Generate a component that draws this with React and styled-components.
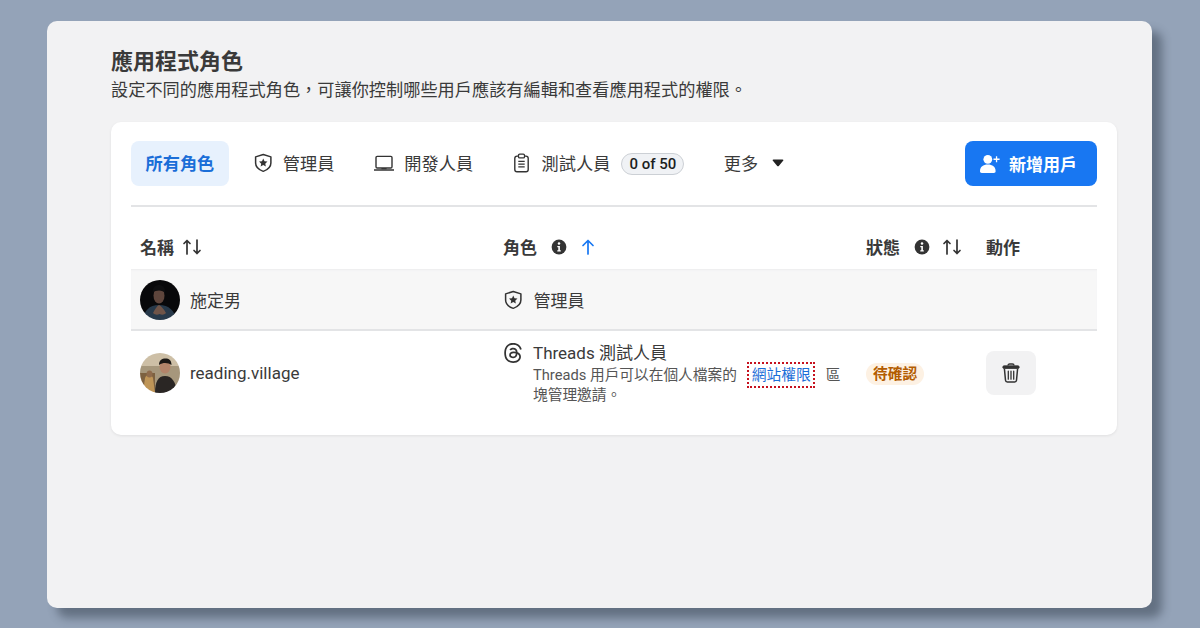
import React from 'react';
import styled, { createGlobalStyle } from 'styled-components';
import { SiThreads } from 'react-icons/si';

const GlobalStyle = createGlobalStyle`
  html, body {
    margin: 0;
    padding: 0;
  }
  body {
    font-family: Roboto, "Noto Sans CJK TC", sans-serif;
    color: #3a3a3a;
  }
  * {
    box-sizing: border-box;
  }
`;

const ShieldIcon = () => (
  <svg width="18.5" height="20" viewBox="0.8 0.6 18.4 19" fill="none">
    <path d="M10 1.6 17.6 4v6.200c0 4-3.400 6.800-7.600 8.200-4.200-1.400-7.600-4.200-7.600-8.200V4L10 1.600Z" stroke="#333" strokeWidth="1.500" strokeLinejoin="round" />
    <path d="m10 5.700 1.250 2.700 2.950.33-2.200 2 .6 2.900-2.600-1.470-2.600 1.470.6-2.900-2.200-2 2.950-.33L10 5.700Z" fill="#333" />
  </svg>
);

const LaptopIcon = () => (
  <svg width="20" height="20" viewBox="0 0 20 20" fill="none">
    <rect x="2" y="3.400" width="16" height="11.600" rx="1.200" stroke="#333" strokeWidth="1.400" />
    <path d="M.5 17h19" stroke="#333" strokeWidth="1.600" strokeLinecap="round" />
    <path d="M7.400 15.700h5.200" stroke="#333" strokeWidth="1.200" />
  </svg>
);

const ClipboardIcon = () => (
  <svg width="15" height="20" viewBox="2.500 0.400 15 19.300" fill="none">
    <rect x="3.300" y="3.200" width="13.400" height="15.600" rx="2.200" stroke="#333" strokeWidth="1.400" />
    <rect x="7" y="1.200" width="6" height="3.700" rx="1.200" fill="#fff" stroke="#333" strokeWidth="1.300" />
    <path d="M6.800 8.400h6.400M6.800 11.200h6.400M6.800 14h6.400" stroke="#333" strokeWidth="1.300" />
  </svg>
);

const CaretIcon = () => (
  <svg width="12" height="8" viewBox="0 0 12 8">
    <path d="M.6 1.100C.6.600 1 .4 1.500.4h9c.5 0 .9.2.9.7 0 .3-.1.5-.3.7L6.800 6.900c-.4.4-1.200.4-1.600 0L.9 1.800C.7 1.600.6 1.400.6 1.100Z" fill="#222" />
  </svg>
);

const InfoIcon = () => (
  <svg width="16" height="16" viewBox="0 0 16 16">
    <circle cx="8" cy="8" r="7.400" fill="#333" />
    <circle cx="8" cy="4.600" r="1.250" fill="#fff" />
    <path d="M6.300 7h2.600v4.200h.9v1.200H6.300v-1.200h1V8.200h-1V7Z" fill="#fff" />
  </svg>
);

const SortIcon = () => (
  <svg width="20" height="16" viewBox="0 0 20 16" fill="none" stroke="#333" strokeWidth="1.700" strokeLinecap="round" strokeLinejoin="round">
    <path d="M5 15V1.500M2 4.500l3-3 3 3" />
    <path d="M15 1v13.500M12 11.500l3 3 3-3" />
  </svg>
);

const SortUpIcon = () => (
  <svg width="14" height="16" viewBox="0 0 14 16" fill="none" stroke="#1877f2" strokeWidth="1.700" strokeLinecap="round" strokeLinejoin="round">
    <path d="M7 15V1.500M2 6.500l5-5 5 5" />
  </svg>
);

const AddUserIcon = () => (
  <svg width="22" height="22" viewBox="0 0 22 22" fill="#fff">
    <circle cx="8.800" cy="6.300" r="4.400" />
    <path d="M1 18.200c0-4.300 3.200-6.600 7.800-6.600s7.800 2.300 7.800 6.600c0 1-.7 1.700-1.700 1.700H2.700c-1 0-1.700-.7-1.700-1.700Z" />
    <path d="M16.900 3.200h1.300v2.400h2.400v1.300h-2.400v2.400h-1.300V6.900h-2.400V5.600h2.400V3.200Z" />
  </svg>
);

const TrashIcon = () => (
  <svg width="18" height="20" viewBox="0 0 18 20" fill="none" stroke="#333">
    <path d="M6 2.600c0-1 .6-1.600 1.600-1.600h2.800c1 0 1.600.6 1.600 1.600" strokeWidth="1.400" />
    <rect x=".8" y="2.800" width="16.400" height="2.700" rx="1.300" fill="#333" strokeWidth=".8" />
    <path d="M2.400 5.600 3.500 17.300c.1 1 .8 1.700 1.800 1.700h7.400c1 0 1.700-.7 1.800-1.700l1.100-11.700" strokeWidth="1.500" />
    <path d="M6.300 8.200v8M9 8.200v8M11.700 8.200v8" strokeWidth="1.300" strokeLinecap="round" />
  </svg>
);

const DarkPortrait = () => (
  <svg viewBox="0 0 40 40" width="40" height="40">
    <rect width="40" height="40" fill="#08080a" />
    <path d="M3 40c1-9 6-15 16-15s16 6 17 15Z" fill="#27394a" />
    <ellipse cx="19" cy="15.500" rx="5.500" ry="8" fill="#5e453c" />
    <path d="M12.500 13c0-6 3-8 6.500-8s6.500 2 6 8c-2-3-9-3.500-12.500 0Z" fill="#0e0e10" />
    <path d="M13 33c2-4 4-7 6-8 2 1 5 4 7 8-2 2-4 2-6.500 1-2 1-4.500 1-6.500-1Z" fill="#6f5448" />
  </svg>
);

const LightPortrait = () => (
  <svg viewBox="0 0 40 40" width="40" height="40">
    <rect width="40" height="40" fill="#a6977c" />
    <rect width="40" height="13" fill="#cdbfa6" />
    <path d="M0 20h15v20H0Z" fill="#7d6140" />
    <path d="M5 25c1-4 7-4 8 0l2 15H3Z" fill="#bf9557" />
    <ellipse cx="9.500" cy="21" rx="3" ry="3.500" fill="#8f6b4c" />
    <path d="M15 40c0-11 3-17 10-17s11 6 12 17Z" fill="#2a2624" />
    <ellipse cx="25" cy="14" rx="5.500" ry="6.500" fill="#b3846a" />
    <path d="M19 12c0-5 3-6.500 6.500-6.500s6 1.500 6 6.500c-3-2-8-3-12.500 0Z" fill="#1c1816" />
  </svg>
);

const Page = styled.div`
  width: 1200px;
  height: 628px;
  overflow: hidden;
  background: #94a3b8;
  padding: 21px 48px 21px 47px;
`;

const Window = styled.main`
  height: 587px;
  padding: 26px 35px 0 64px;
  background: #f2f2f3;
  border-radius: 10px;
  box-shadow: 10px 10px 10px rgba(40, 50, 65, 0.45);
`;

const Heading = styled.h1`
  margin: 0;
  font-size: 22px;
  line-height: 30px;
  font-weight: 700;
  color: #3a3a3a;
`;

const Description = styled.p`
  margin: 0 0 19px;
  font-size: 17.2px;
  line-height: 26px;
  color: #3a3a3a;
`;

const Card = styled.section`
  height: 313px;
  padding: 19px 20px 0;
  background: #fff;
  border-radius: 10px;
  box-shadow: 0 1px 3px rgba(0, 0, 0, 0.08);
`;

const Toolbar = styled.div`
  display: flex;
  align-items: center;
  height: 66px;
  padding-bottom: 19px;
  border-bottom: 2px solid #e3e4e6;
`;

const Tab = styled.div`
  display: flex;
  align-items: center;
  gap: ${({ $gap }) => $gap || 10}px;
  height: 45px;
  margin-right: ${({ $after }) => $after || 0}px;
  padding: ${({ $active }) => ($active ? '0 14.5px 2px' : '0 0 2px')};
  border-radius: 8px;
  font-size: 17.2px;
  font-weight: ${({ $active }) => ($active ? 700 : 400)};
  color: ${({ $active }) => ($active ? '#1a6ed8' : '#3a3a3a')};
  background: ${({ $active }) => ($active ? '#e7f1fd' : 'transparent')};
`;

const Count = styled.span`
  display: flex;
  align-items: center;
  height: 22px;
  margin: 0 0 -2px -2px;
  padding: 0 7px;
  border: 1px solid #ccd0d5;
  border-radius: 11px;
  background: #f0f2f5;
  font-size: 15px;
  font-weight: 500;
  color: #1c1e21;
`;

const AddButton = styled.button`
  display: flex;
  align-items: center;
  gap: 8px;
  height: 45px;
  margin-left: auto;
  padding: 0 20px 0 14px;
  border: 0;
  border-radius: 8px;
  background: #1877f2;
  color: #fff;
  font: 700 17px Roboto, "Noto Sans CJK TC", sans-serif;
`;

const HeaderRow = styled.div`
  display: grid;
  grid-template-columns: 363px 363px 120px 1fr;
  align-items: center;
  height: 62px;
  padding: 18px 0 0 9px;
`;

const HeaderCell = styled.div`
  display: flex;
  align-items: center;
  gap: ${({ $gap }) => $gap || 8}px;
  font-size: 17px;
  font-weight: 700;
  color: #3a3a3a;
`;

const Label = styled.span`
  margin-top: -2px;
`;

const StatusSort = styled.span`
  display: flex;
  margin-left: -2px;
`;

const Row = styled.div`
  display: grid;
  grid-template-columns: 363px 363px 120px 1fr;
  align-items: center;
  height: ${({ $height }) => $height}px;
  padding-left: 9px;
  padding-top: ${({ $muted }) => ($muted ? 2 : 0)}px;
  background: ${({ $muted }) => ($muted ? '#f7f7f7' : '#fff')};
  border-bottom: ${({ $muted }) => ($muted ? '2px solid #e3e4e6' : '0')};
  box-shadow: ${({ $muted }) => ($muted ? 'inset 0 2px 2px -1px #ededee' : 'none')};
`;

const Person = styled.div`
  display: flex;
  align-items: center;
  gap: 10px;
  font-size: 17px;
  color: #3a3a3a;
`;

const Avatar = styled.div`
  width: 40px;
  height: 40px;
  border-radius: 50%;
  overflow: hidden;
  svg {
    display: block;
    filter: blur(0.6px);
  }
`;

const RoleLine = styled.div`
  display: flex;
  align-items: ${({ $top }) => ($top ? 'flex-start' : 'center')};
  align-self: ${({ $top }) => ($top ? 'start' : 'center')};
  gap: ${({ $top }) => ($top ? 10 : 11)}px;
  margin-top: ${({ $top }) => ($top ? 12 : 0)}px;
  padding-left: ${({ $top }) => ($top ? 0 : 1)}px;
  font-size: 17px;
  color: #3a3a3a;
`;

const RoleBody = styled.div`
  width: 309px;
  margin-top: -1px;
`;

const RoleName = styled.div`
  margin-bottom: 1px;
  font-size: 17px;
  line-height: 22px;
`;

const RoleText = styled.div`
  font-size: 14.7px;
  line-height: 20px;
  color: #555;
`;

const PermissionLink = styled.span`
  margin: 0 13px 0 12px;
  padding: 2px 2px 2px 3px;
  color: #1a6ed8;
  outline: 2px dotted #c6121f;
`;

const StatusCell = styled.div`
  display: flex;
  padding-top: 2px;
`;

const Pending = styled.span`
  padding: 0 7px;
  border-radius: 11px;
  background: #fdf1e3;
  font-size: 14.7px;
  line-height: 22px;
  font-weight: 700;
  color: #b35c00;
`;

const IconButton = styled.div`
  display: flex;
  align-items: center;
  justify-content: center;
  width: 49.5px;
  height: 44px;
  border-radius: 8px;
  background: #f2f2f3;
`;

export default function App() {
  return (
    <Page>
      <GlobalStyle />
      <Window>
        <Heading>應用程式角色</Heading>
        <Description>設定不同的應用程式角色，可讓你控制哪些用戶應該有編輯和查看應用程式的權限。</Description>
        <Card>
          <Toolbar>
            <Tab $active $after={25.5}>所有角色</Tab>
            <Tab $after={40}><ShieldIcon />管理員</Tab>
            <Tab $after={40.5}><LaptopIcon />開發人員</Tab>
            <Tab $after={39.5} $gap={13}>
              <ClipboardIcon />測試人員<Count>0 of 50</Count>
            </Tab>
            <Tab $gap={14}>更多<CaretIcon /></Tab>
            <AddButton><AddUserIcon />新增用戶</AddButton>
          </Toolbar>

          <HeaderRow>
            <HeaderCell><Label>名稱</Label><SortIcon /></HeaderCell>
            <HeaderCell $gap={14}><Label>角色</Label><InfoIcon /><SortUpIcon /></HeaderCell>
            <HeaderCell $gap={14}><Label>狀態</Label><InfoIcon /><StatusSort><SortIcon /></StatusSort></HeaderCell>
            <HeaderCell><Label>動作</Label></HeaderCell>
          </HeaderRow>

          <Row $muted $height={62}>
            <Person>
              <Avatar><DarkPortrait /></Avatar>
              <Label>施定男</Label>
            </Person>
            <RoleLine><ShieldIcon /><Label>管理員</Label></RoleLine>
          </Row>

          <Row $height={84}>
            <Person>
              <Avatar><LightPortrait /></Avatar>
              reading.village
            </Person>
            <RoleLine $top>
              <SiThreads size={20} color="#333" />
              <RoleBody>
                <RoleName>Threads 測試人員</RoleName>
                <RoleText>
                  Threads 用戶可以在個人檔案的<PermissionLink>網站權限</PermissionLink>區塊管理邀請。
                </RoleText>
              </RoleBody>
            </RoleLine>
            <StatusCell><Pending>待確認</Pending></StatusCell>
            <IconButton><TrashIcon /></IconButton>
          </Row>
        </Card>
      </Window>
    </Page>
  );
}
